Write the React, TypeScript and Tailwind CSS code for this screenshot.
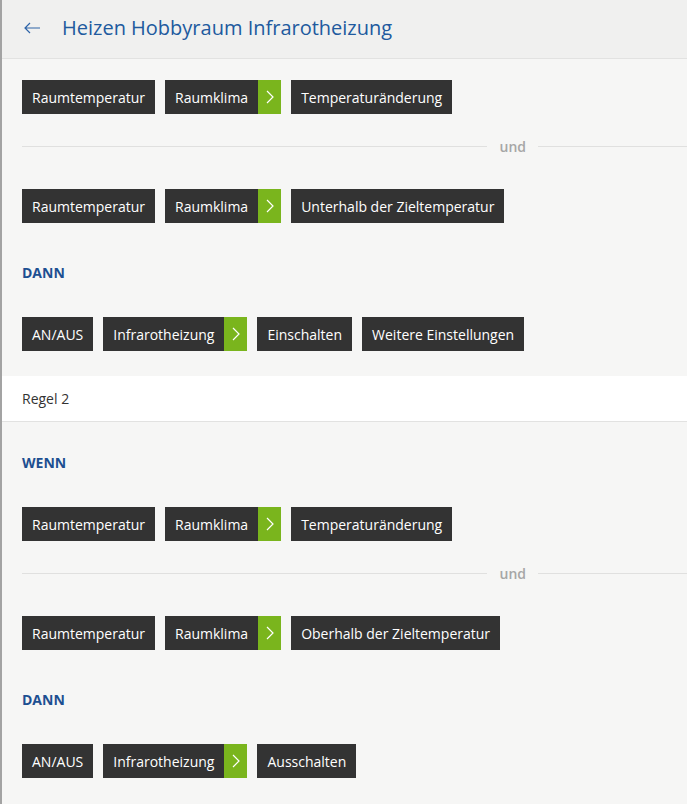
import React from "react";

type Chip = { label: string; arrow?: boolean };

function ChipRow({ chips }: { chips: Chip[] }) {
  return (
    <div className="flex gap-[10px]">
      {chips.map((c, i) => (
        <div key={i} className="flex h-[34px] bg-[#333333] text-white text-[14px]">
          <span className="flex items-center px-[10px]">{c.label}</span>
          {c.arrow && (
            <span className="flex w-[23px] items-center justify-center bg-[#7ab51d]">
              <svg width="8" height="14" viewBox="0 0 8 14" fill="none">
                <path d="M1 1l6 6-6 6" stroke="#ffffff" strokeWidth="1.2" />
              </svg>
            </span>
          )}
        </div>
      ))}
    </div>
  );
}

function Und() {
  return (
    <div className="flex items-center h-[75px] pb-[10px]">
      <div className="flex-1 border-t border-[#e0e0df]" />
      <span className="px-3 text-[14px] font-semibold text-[#a6a6a6]">und</span>
      <div className="w-[149px] border-t border-[#e0e0df]" />
    </div>
  );
}

function Label({ text }: { text: string }) {
  return <div className="text-[14px] font-bold text-[#1d4f91] h-[20px] leading-[20px]">{text}</div>;
}

export default function App() {
  const sensorA: Chip[] = [
    { label: "Raumtemperatur" },
    { label: "Raumklima", arrow: true },
    { label: "Temperaturänderung" },
  ];
  return (
    <div
      className="min-h-[804px] w-[687px] bg-[#f6f6f5] border-l-2 border-[#a3a3a3] text-[#333333]"
      style={{ fontFamily: '"Open Sans", sans-serif' }}
    >
      <div className="flex items-center h-[59px] bg-[#f0f0ef] border-b border-[#e2e2e1] pl-[22px]">
        <svg width="17" height="12" viewBox="0 0 17 12" fill="none" className="mt-[-2px]">
          <path d="M16 6H1M6 1L1 6l5 5" stroke="#2e64a8" strokeWidth="1.2" />
        </svg>
        <h1 className="ml-[21px] text-[20px] text-[#215a9e] mt-[-3px]">Heizen Hobbyraum Infrarotheizung</h1>
      </div>

      <div className="pl-[20px]">
        <div className="pt-[21px]">
          <ChipRow chips={sensorA} />
        </div>
        <Und />
        <ChipRow
          chips={[
            { label: "Raumtemperatur" },
            { label: "Raumklima", arrow: true },
            { label: "Unterhalb der Zieltemperatur" },
          ]}
        />
        <div className="pt-[40px]">
          <Label text="DANN" />
        </div>
        <div className="pt-[34px] pb-[25px]">
          <ChipRow
            chips={[
              { label: "AN/AUS" },
              { label: "Infrarotheizung", arrow: true },
              { label: "Einschalten" },
              { label: "Weitere Einstellungen" },
            ]}
          />
        </div>
      </div>

      <div className="flex items-center h-[46px] bg-white border-b border-[#e2e2e1] pl-[20px] text-[14px]">
        Regel 2
      </div>

      <div className="pl-[20px]">
        <div className="pt-[31px]">
          <Label text="WENN" />
        </div>
        <div className="pt-[34px]">
          <ChipRow chips={sensorA} />
        </div>
        <Und />
        <ChipRow
          chips={[
            { label: "Raumtemperatur" },
            { label: "Raumklima", arrow: true },
            { label: "Oberhalb der Zieltemperatur" },
          ]}
        />
        <div className="pt-[40px]">
          <Label text="DANN" />
        </div>
        <div className="pt-[34px] pb-[25px]">
          <ChipRow
            chips={[
              { label: "AN/AUS" },
              { label: "Infrarotheizung", arrow: true },
              { label: "Ausschalten" },
            ]}
          />
        </div>
      </div>
    </div>
  );
}
